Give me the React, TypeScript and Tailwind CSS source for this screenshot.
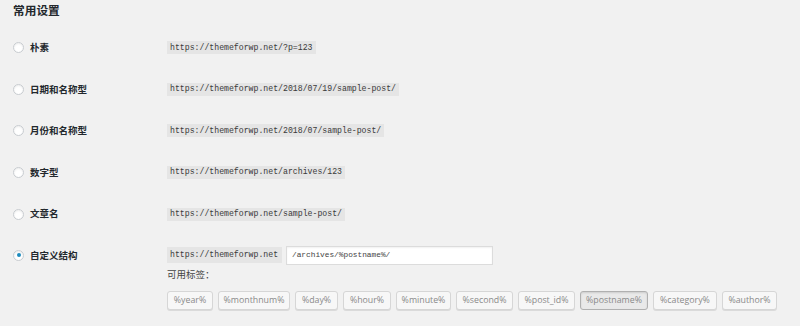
const rows = [
  { label: '朴素', url: 'https://themeforwp.net/?p=123' },
  { label: '日期和名称型', url: 'https://themeforwp.net/2018/07/19/sample-post/' },
  { label: '月份和名称型', url: 'https://themeforwp.net/2018/07/sample-post/' },
  { label: '数字型', url: 'https://themeforwp.net/archives/123' },
  { label: '文章名', url: 'https://themeforwp.net/sample-post/' },
]

const tags = [
  { name: '%year%', w: 'w-[46px]' },
  { name: '%monthnum%', w: 'w-[72px]' },
  { name: '%day%', w: 'w-[43px]' },
  { name: '%hour%', w: 'w-[48px]' },
  { name: '%minute%', w: 'w-[55px]' },
  { name: '%second%', w: 'w-[57px]' },
  { name: '%post_id%', w: 'w-[57px]' },
  { name: '%postname%', w: 'w-[68px]', active: true },
  { name: '%category%', w: 'w-[64px]' },
  { name: '%author%', w: 'w-[55px]' },
]

const cjk = { fontFamily: '"Noto Sans CJK SC", "Noto Sans", sans-serif' }
const mono = { fontFamily: '"Liberation Mono", "DejaVu Sans Mono", monospace' }
const sans = { fontFamily: '"Open Sans", "Noto Sans", sans-serif' }

function Radio({ checked }: { checked?: boolean }) {
  return (
    <span className="flex items-center justify-center w-[11px] h-[11px] rounded-full bg-white border border-[#c8ccd0] shadow-[inset_0_1px_2px_rgba(0,0,0,0.08)] shrink-0">
      {checked && <span className="w-[4px] h-[4px] rounded-full bg-[#1e8cbe]" />}
    </span>
  )
}

function Label({ text, checked }: { text: string; checked?: boolean }) {
  return (
    <div className="flex items-center gap-[6px] w-[154px] shrink-0">
      <Radio checked={checked} />
      <span className="text-[9.5px] leading-none font-semibold text-[#23282d]" style={cjk}>
        {text}
      </span>
    </div>
  )
}

export default function App() {
  return (
    <div className="w-[800px] h-[326px] bg-[#f1f1f1] px-[13px] pt-[3px] overflow-hidden">
      <h2 className="text-[11.7px] leading-[14px] font-bold text-[#23282d]" style={cjk}>
        常用设置
      </h2>

      <div className="flex flex-col mt-[10px]">
        {rows.map((r) => (
          <div key={r.label} className="flex items-center h-[41.6px]">
            <Label text={r.label} />
            <code
              className="h-[13px] flex items-center px-[3px] bg-[#e5e5e5] text-[8.2px] text-[#3a3a3a] leading-none"
              style={mono}
            >
              {r.url}
            </code>
          </div>
        ))}

        <div className="flex items-start pt-[11px]">
          <div className="h-[19px] flex items-center">
            <Label text="自定义结构" checked />
          </div>
          <div className="flex flex-col">
            <div className="flex items-center gap-[4px] h-[19px]">
              <code
                className="h-[16px] w-[115px] flex items-center px-[3px] bg-[#e5e5e5] text-[8.2px] text-[#3a3a3a] leading-none"
                style={mono}
              >
                https://themeforwp.net
              </code>
              <div
                className="h-[19px] w-[207px] flex items-center px-[5px] bg-white border border-[#dcdcdc] shadow-[inset_0_1px_2px_rgba(0,0,0,0.06)] text-[7.8px] text-[#444]"
                style={mono}
              >
                /archives/%postname%/
              </div>
            </div>
            <div className="mt-[3px] text-[9.5px] leading-[13px] text-[#444]" style={cjk}>
              可用标签：
            </div>
            <div className="flex gap-[5px] mt-[10px]">
              {tags.map((t) => (
                <span
                  key={t.name}
                  className={`${t.w} h-[19px] flex items-center justify-center rounded-[3px] border text-[8.8px] text-[#8a8a8a] ${
                    t.active
                      ? 'bg-[#e9e9e9] border-[#b0b0b0] shadow-[inset_0_1px_2px_rgba(0,0,0,0.12)]'
                      : 'bg-[#f7f7f7] border-[#d6d6d6] shadow-[0_1px_0_#dadada]'
                  }`}
                  style={sans}
                >
                  {t.name}
                </span>
              ))}
            </div>
          </div>
        </div>
      </div>
    </div>
  )
}
